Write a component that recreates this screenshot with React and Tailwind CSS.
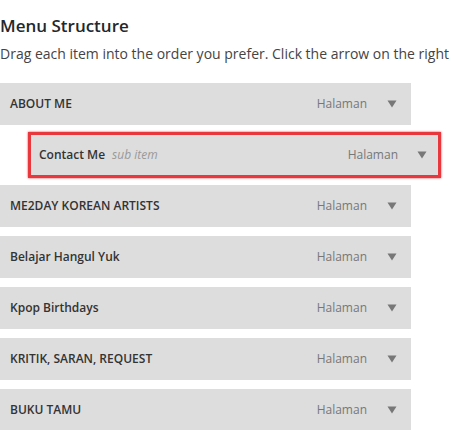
import React from "react";

const items = [
  { title: "ABOUT ME" },
  { title: "Contact Me", sub: true },
  { title: "ME2DAY KOREAN ARTISTS" },
  { title: "Belajar Hangul Yuk" },
  { title: "Kpop Birthdays" },
  { title: "KRITIK, SARAN, REQUEST" },
  { title: "BUKU TAMU" },
];

function Arrow() {
  return (
    <svg width="10" height="8" viewBox="0 0 10 8" className="block">
      <path d="M0.5 0.5 L9.5 0.5 L5 7.5 Z" fill="#777" />
    </svg>
  );
}

function Bar({ title, sub }) {
  return (
    <div
      className={
        sub
          ? "flex h-[40px] items-center bg-[#dddddd] pl-[8px] pr-[11px]"
          : "flex h-[42px] items-center bg-[#dddddd] pl-[10px] pr-[14px]"
      }
    >
      <span className="text-[12px] font-semibold text-[#333]">{title}</span>
      {sub && <span className="ml-[7px] text-[12px] italic text-[#999]">sub item</span>}
      <span className={sub ? "ml-auto text-[12px] text-[#777]" : "ml-auto text-[12px] text-[#777]"}>Halaman</span>
      <span className={sub ? "ml-[19px]" : "ml-[20px]"}><Arrow /></span>
    </div>
  );
}

export default function App() {
  return (
    <div className="h-[430px] w-[451px] overflow-hidden bg-white" style={{ fontFamily: '"Open Sans", sans-serif' }}>
      <div className="pt-[14px]">
        <h2 className="text-[17px] font-semibold leading-[24px] text-[#23282d]">Menu Structure</h2>
        <p className="mt-[6px] whitespace-nowrap text-[14px] leading-[20px] text-[#444]">
          Drag each item into the order you prefer. Click the arrow on the right
        </p>
      </div>
      <div className="mt-[19px] flex flex-col gap-[9px]">
        {items.map((it, i) =>
          it.sub ? (
            <div key={i} className="ml-[28px] w-[413px] -my-[2px] border-[3px] border-[#e8383d] shadow-[0_0_2px_#e8383d]">
              <Bar title={it.title} sub />
            </div>
          ) : (
            <div key={i} className="w-[411px]">
              <Bar title={it.title} />
            </div>
          )
        )}
      </div>
    </div>
  );
}
